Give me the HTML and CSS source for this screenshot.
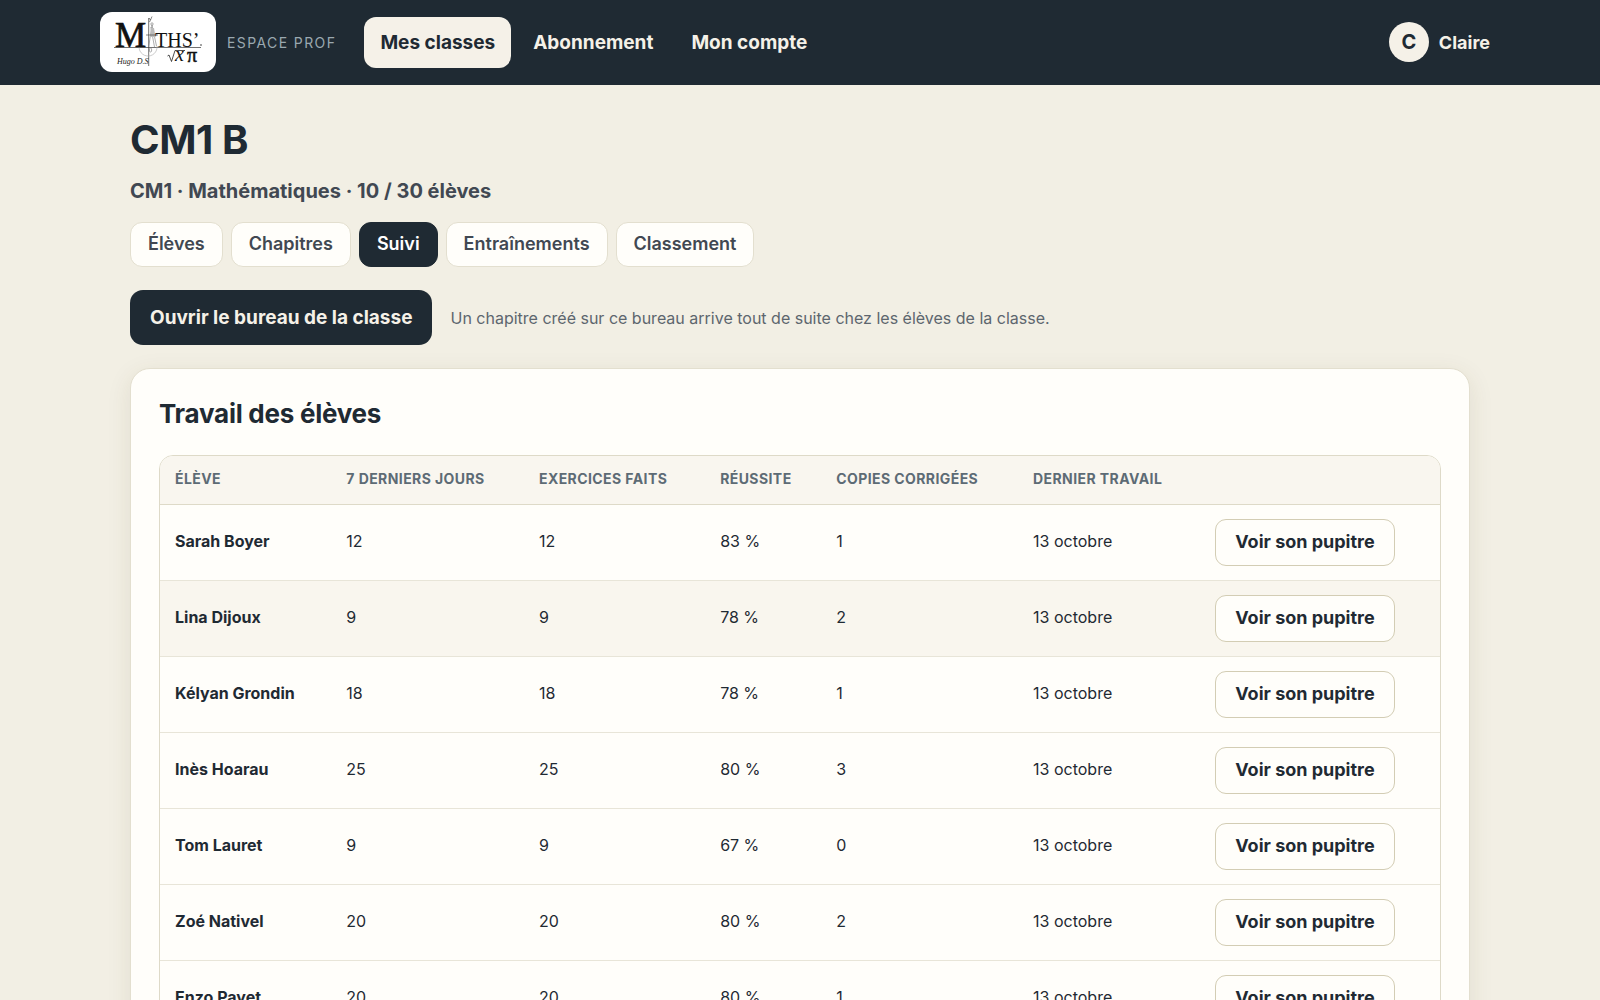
FILE: index.html
```html
<!DOCTYPE html>
<html lang="fr">
<head>
  <meta charset="UTF-8" />
  <meta name="viewport" content="width=device-width, initial-scale=1.0" />
  <title>CM1 B - Suivi</title>
  <link rel="stylesheet" href="styles.css">
</head>
<body>
  <header class="topbar">
    <div class="topbar-inner">
      <a class="brand" href="#">
        <span class="logo">
          <svg viewBox="0 0 96 52" width="96" height="52" role="img" aria-label="Maths'">
            <!-- axes -->
            <g stroke="#333" fill="none" stroke-width="0.7">
              <path d="M4 31.500H91"/>
              <path d="M38.700 2V50"/>
              <path d="M39 2l1.500 2 1.500-3.500M40.500 4l-1 2" stroke-width="0.6"/>
              <circle cx="91" cy="29" r="0.5"/>
            </g>
            <!-- compas -->
            <g stroke="#777" fill="none" stroke-width="0.6">
              <path d="M30 27a9 9 0 1 0 17 3" stroke="#aaa"/>
              <circle cx="42" cy="8" r="1.200"/>
              <path d="M42 9L38.700 31M42 9L46.500 30M40.800 11L44.500 31" />
              <path d="M41 12h3l1.500 9h-5z" fill="#bbb" stroke="none"/>
              <path d="M36 19H48" stroke="#333"/>
              <ellipse cx="40.500" cy="34" rx="1.200" ry="2"/>
            </g>
            <g class="logo-serif">
              <text x="5" y="31" font-size="35" stroke="#111" stroke-width="0.7">M</text>
              <text x="45" y="31" font-size="20">THS’</text>
              <text x="65" y="45" font-size="20" font-style="italic">x</text>
              <text x="77" y="46" font-size="20" stroke="#111" stroke-width="0.5">π</text>
            </g>
            <path d="M57.500 40l1.500-1 2.500 6.500L65 34.500H75" fill="none" stroke="#222" stroke-width="0.8"/>
            <text class="logo-sign" x="7" y="48" font-size="8">Hugo D.S</text>
          </svg>
        </span>
        <span class="brand-label">Espace prof</span>
      </a>
      <nav class="nav">
        <a class="nav-link active" href="#">Mes classes</a>
        <a class="nav-link" href="#">Abonnement</a>
        <a class="nav-link" href="#">Mon compte</a>
      </nav>
      <a class="user" href="#">
        <span class="avatar">C</span>
        <span>Claire</span>
      </a>
    </div>
  </header>

  <main class="page">
    <h1>CM1 B</h1>
    <p class="subtitle">CM1 · Mathématiques · 10 / 30 élèves</p>

    <nav class="tabs">
      <a class="tab" href="#">Élèves</a>
      <a class="tab" href="#">Chapitres</a>
      <a class="tab active" href="#">Suivi</a>
      <a class="tab" href="#">Entraînements</a>
      <a class="tab" href="#">Classement</a>
    </nav>

    <div class="actions">
      <button class="btn-primary" type="button">Ouvrir le bureau de la classe</button>
      <span class="hint">Un chapitre créé sur ce bureau arrive tout de suite chez les élèves de la classe.</span>
    </div>

    <section class="card">
      <h2>Travail des élèves</h2>
      <div class="table-wrap">
        <table>
          <thead>
            <tr>
              <th>Élève</th>
              <th>7 derniers jours</th>
              <th>Exercices faits</th>
              <th>Réussite</th>
              <th>Copies corrigées</th>
              <th>Dernier travail</th>
              <th></th>
            </tr>
          </thead>
          <tbody>
            <tr>
              <td class="name">Sarah Boyer</td><td>12</td><td>12</td><td>83 %</td><td>1</td><td>13 octobre</td>
              <td class="cell-btn"><button class="btn-row" type="button">Voir son pupitre</button></td>
            </tr>
            <tr>
              <td class="name">Lina Dijoux</td><td>9</td><td>9</td><td>78 %</td><td>2</td><td>13 octobre</td>
              <td class="cell-btn"><button class="btn-row" type="button">Voir son pupitre</button></td>
            </tr>
            <tr>
              <td class="name">Kélyan Grondin</td><td>18</td><td>18</td><td>78 %</td><td>1</td><td>13 octobre</td>
              <td class="cell-btn"><button class="btn-row" type="button">Voir son pupitre</button></td>
            </tr>
            <tr>
              <td class="name">Inès Hoarau</td><td>25</td><td>25</td><td>80 %</td><td>3</td><td>13 octobre</td>
              <td class="cell-btn"><button class="btn-row" type="button">Voir son pupitre</button></td>
            </tr>
            <tr>
              <td class="name">Tom Lauret</td><td>9</td><td>9</td><td>67 %</td><td>0</td><td>13 octobre</td>
              <td class="cell-btn"><button class="btn-row" type="button">Voir son pupitre</button></td>
            </tr>
            <tr>
              <td class="name">Zoé Nativel</td><td>20</td><td>20</td><td>80 %</td><td>2</td><td>13 octobre</td>
              <td class="cell-btn"><button class="btn-row" type="button">Voir son pupitre</button></td>
            </tr>
            <tr>
              <td class="name">Enzo Payet</td><td>20</td><td>20</td><td>80 %</td><td>1</td><td>13 octobre</td>
              <td class="cell-btn"><button class="btn-row" type="button">Voir son pupitre</button></td>
            </tr>
          </tbody>
        </table>
      </div>
    </section>
  </main>
</body>
</html>
```
FILE: styles.css
```css
* {
  box-sizing: border-box;
}
body {
  margin: 0;
  font-family: Inter, sans-serif;
  font-size: 16px;
  line-height: 1.5;
  color: #1f2a33;
  background: #f2efe4;
}
a {
  color: inherit;
  text-decoration: none;
}
button {
  font-family: inherit;
  cursor: pointer;
}

/* barre du haut */
.topbar {
  background: #1f2a33;
  color: #f5f1e8;
}
.topbar-inner {
  display: flex;
  align-items: center;
  gap: 28px;
  max-width: 1400px;
  margin: 0 auto;
  padding: 12px 0 13px;
}
.brand {
  display: flex;
  align-items: center;
  gap: 11px;
}
.logo {
  display: flex;
  align-items: center;
  justify-content: center;
  width: 116px;
  height: 60px;
  background: #fff;
  border-radius: 12px;
}
.logo-serif {
  font-family: "Liberation Serif", serif;
  fill: #111;
}
.logo-sign {
  font-family: "Liberation Serif", serif;
  font-style: italic;
  fill: #222;
}
.brand-label {
  font-size: 14px;
  letter-spacing: 0.1em;
  text-transform: uppercase;
  color: #9aa8b0;
}
.nav {
  display: flex;
  gap: 6px;
}
.nav-link {
  padding: 11px 16px;
  border-radius: 12px;
  font-size: 19px;
  line-height: 29px;
  font-weight: 700;
}
.nav-link.active {
  background: #f5f1e8;
  color: #1f2a33;
}
.user {
  display: flex;
  align-items: center;
  gap: 10px;
  margin-left: auto;
  padding-right: 10px;
  font-size: 18px;
  font-weight: 700;
}
.avatar {
  display: flex;
  align-items: center;
  justify-content: center;
  width: 40px;
  height: 40px;
  border-radius: 50%;
  background: #f5f1e8;
  color: #1f2a33;
  font-size: 20px;
}

.page {
  max-width: 1400px;
  margin: 0 auto;
  padding: 30px 30px 60px;
}
h1 {
  margin: 0;
  font-size: 40px;
  line-height: 50px;
  letter-spacing: -0.01em;
}
.subtitle {
  margin: 11px 0 16px;
  font-size: 20px;
  line-height: 30px;
  font-weight: 700;
  color: #414852;
}

/* onglets */
.tabs {
  display: flex;
  flex-wrap: wrap;
  gap: 8px;
  margin-bottom: 23px;
}
.tab {
  padding: 7px 17px 9px;
  border: 1px solid #e3dfcf;
  border-radius: 12px;
  background: #fffefa;
  color: #414852;
  font-size: 18px;
  font-weight: 600;
}
.tab.active {
  background: #1f2a33;
  border-color: #1f2a33;
  color: #fff;
}

.actions {
  display: flex;
  align-items: center;
  gap: 18px;
  margin-bottom: 23px;
}
.btn-primary {
  min-height: 55px;
  padding: 0 20px;
  border: 0;
  border-radius: 13px;
  background: #1f2a33;
  color: #f5f1e8;
  font-size: 19px;
  font-weight: 700;
}
.hint {
  color: #5d666e;
}

.card {
  padding: 28px;
  border: 1px solid #e3dfcf;
  border-radius: 20px;
  background: #fffefa;
  box-shadow: 0 6px 24px rgba(80, 70, 30, 0.1);
}
h2 {
  margin: 0 0 24px;
  font-size: 26px;
  line-height: 34px;
  letter-spacing: -0.01em;
}

/* tableau des élèves */
.table-wrap {
  overflow: hidden;
  border: 1px solid #dedac8;
  border-radius: 14px;
}
table {
  width: 100%;
  border-collapse: collapse;
}
th, td {
  padding: 14px 15px 17px;
  text-align: left;
  white-space: nowrap;
}
th {
  padding-top: 12px;
  padding-bottom: 15px;
  background: #f9f6ef;
  border-bottom: 1px solid #dedac8;
  font-size: 14px;
  font-weight: 700;
  letter-spacing: 0.03em;
  text-transform: uppercase;
  color: #5d6b75;
}
tbody tr + tr td {
  border-top: 1px solid #e8e5d8;
}
tbody tr:nth-child(2) {
  background: #f9f6ee;
}
.name {
  font-weight: 700;
}
.cell-btn {
  padding-bottom: 14px;
}
.btn-row {
  height: 47px;
  padding: 0 19px 2px;
  border: 1px solid #d3cdb4;
  border-radius: 11px;
  background: #fffefa;
  color: #1f2a33;
  font-size: 18px;
  font-weight: 700;
}
```
